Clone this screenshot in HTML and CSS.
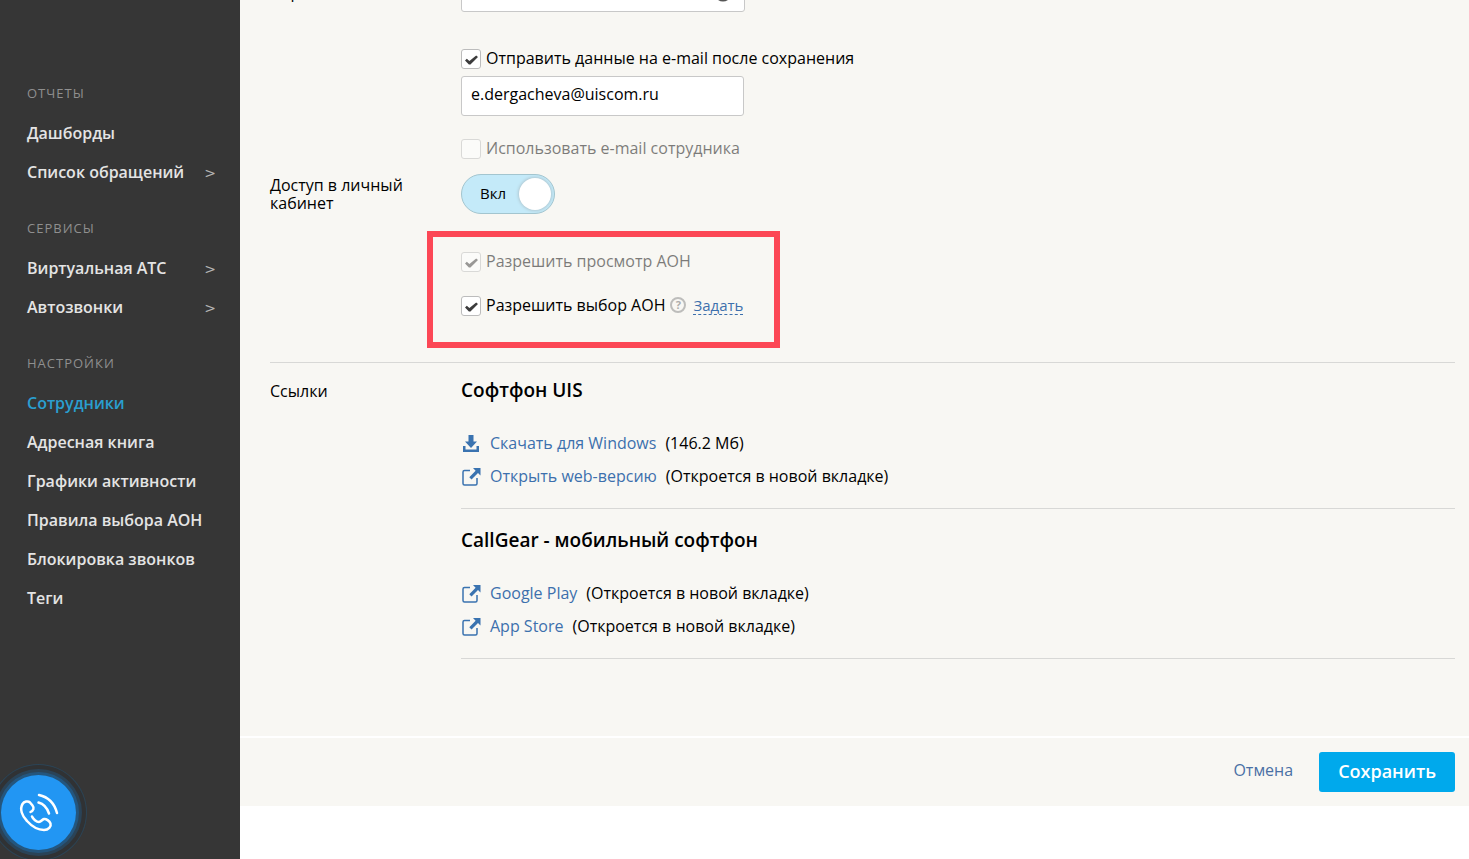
FILE: index.html
```html
<!DOCTYPE html>
<html lang="ru">
<head>
    <meta charset="UTF-8">
    <meta name="viewport" content="width=device-width, initial-scale=1.0">
    <title>Сотрудники</title>
    <link rel="stylesheet" href="styles.css">
</head>
<body>
    <svg class="sprite" aria-hidden="true">
        <symbol id="download" viewBox="0 0 20 20">
            <path d="M7.500 1h5v6.500h3.500l-6 6.500L4 7.500h3.500z"/>
            <path d="M2 12h2.500v3.500h11V12H18v6H2z"/>
        </symbol>
        <symbol id="external" viewBox="0 0 20 20">
            <path d="M9 3.500H3.500Q2 3.500 2 5V16.500Q2 18 3.500 18H14.500Q16 18 16 16.500V11" fill="none" stroke="currentColor" stroke-width="1.500"/>
            <path d="M12 1h7.500v7.500l-2.500-2.500L10.500 12.500L8.300 10.300L14.600 3.700z"/>
        </symbol>
    </svg>

    <div class="page">
        <nav class="sidebar">
            <div class="menu">
                <h2>ОТЧЕТЫ</h2>
                <a href="#">Дашборды</a>
                <a href="#">Список обращений <span class="arrow">&gt;</span></a>
            </div>
            <div class="menu">
                <h2>СЕРВИСЫ</h2>
                <a href="#">Виртуальная АТС <span class="arrow">&gt;</span></a>
                <a href="#">Автозвонки <span class="arrow">&gt;</span></a>
            </div>
            <div class="menu">
                <h2>НАСТРОЙКИ</h2>
                <a href="#" class="active">Сотрудники</a>
                <a href="#">Адресная книга</a>
                <a href="#">Графики активности</a>
                <a href="#">Правила выбора АОН</a>
                <a href="#">Блокировка звонков</a>
                <a href="#">Теги</a>
            </div>
        </nav>

        <main class="main">
            <form class="form">
                <div class="row">
                    <label class="name" for="password">Пароль</label>
                    <div class="password">
                        <input type="password" class="field" id="password">
                        <svg class="eye" viewBox="0 0 20 14">
                            <path d="M1 7Q10-4 19 7Q10 18 1 7z" fill="none" stroke="#555" stroke-width="2"/>
                            <circle cx="10" cy="7" r="3" fill="#555"/>
                        </svg>
                    </div>
                </div>

                <div class="row email">
                    <div class="controls">
                        <label class="check"><input type="checkbox" checked>Отправить данные на e-mail после сохранения</label>
                        <input type="email" class="field" value="e.dergacheva@uiscom.ru" aria-label="E-mail">
                        <label class="check disabled"><input type="checkbox" disabled>Использовать e-mail сотрудника</label>
                    </div>
                </div>

                <div class="row access">
                    <label class="name" for="access">Доступ в личный кабинет</label>
                    <div class="controls">
                        <label class="toggle">
                            <input type="checkbox" id="access" checked>
                            <span>Вкл</span>
                        </label>
                        <div class="highlight">
                            <label class="check disabled"><input type="checkbox" checked disabled>Разрешить просмотр АОН</label>
                            <div class="check-line">
                                <label class="check"><input type="checkbox" checked>Разрешить выбор АОН</label>
                                <button type="button" class="help">?</button>
                                <a href="#" class="set">Задать</a>
                            </div>
                        </div>
                    </div>
                </div>

                <div class="row links">
                    <div class="name">Ссылки</div>
                    <div class="controls">
                        <section class="apps">
                            <h3>Софтфон UIS</h3>
                            <p><svg><use href="#download"/></svg><a href="#">Скачать для Windows</a><span>(146.2 Мб)</span></p>
                            <p><svg><use href="#external"/></svg><a href="#">Открыть web-версию</a><span>(Откроется в новой вкладке)</span></p>
                        </section>
                        <section class="apps">
                            <h3>CallGear - мобильный софтфон</h3>
                            <p><svg><use href="#external"/></svg><a href="#">Google Play</a><span>(Откроется в новой вкладке)</span></p>
                            <p><svg><use href="#external"/></svg><a href="#">App Store</a><span>(Откроется в новой вкладке)</span></p>
                        </section>
                    </div>
                </div>
            </form>

            <div class="actions">
                <button type="button" class="cancel">Отмена</button>
                <button type="submit" class="save">Сохранить</button>
            </div>
        </main>
    </div>

    <button class="call" aria-label="Позвонить">
        <svg viewBox="18 42 42 42">
            <path d="M30.500 62C33.500 60.500 34.500 58 32.500 55.500L30 52.500C28 50.500 24 51.500 22.500 54C19.500 59 22 66 27 71C32 76.500 38 80 44 80C48.500 80 51.500 76.500 50.500 73.500C49.500 71 46 68.500 44 69C42 69.500 41 72 39 72C36.500 72 33 69 32 66.500"/>
            <path d="M39 45Q53 48 57 63"/>
            <path d="M38.500 52.500Q46 54.500 49 63.500"/>
        </svg>
    </button>
</body>
</html>
```

FILE: styles.css
```css
* {
    box-sizing: border-box;
}
body {
    margin: 0;
    font-family: "Open Sans", "Noto Sans", sans-serif;
    font-size: 16px;
    color: #000;
    background-color: #fff;
}
a {
    color: #3d70ad;
    text-decoration: none;
}
button,
input {
    font: inherit;
}
.sprite {
    display: none;
}
.page {
    display: flex;
    min-height: 100vh;
}

/* Sidebar */
.sidebar {
    flex: 0 0 240px;
    padding: 73px 24px 0 27px;
    background-color: #363636;
}
.menu {
    margin-bottom: 16px;
}
.menu h2 {
    margin: 0;
    font-size: 13px;
    font-weight: 400;
    line-height: 41px;
    letter-spacing: 1px;
    color: #8f8f8f;
}
.menu a {
    display: flex;
    justify-content: space-between;
    font-weight: 600;
    line-height: 39px;
    color: #e4e4e4;
}
.menu a.active {
    color: #2a9fd0;
}
.menu .arrow {
    font-family: "DejaVu Sans", sans-serif;
    font-size: 14px;
    font-weight: 400;
    line-height: 41px;
    height: 39px;
    color: #b4b4b4;
}

/* Form */
.main {
    flex: 1;
    min-width: 0;
    overflow: hidden;
}
.form {
    margin-top: -28px;
    padding: 0 14px 77px 30px;
    background-color: #f8f7f3;
}
.row {
    display: grid;
    grid-template-columns: 191px 1fr;
}
.row .controls {
    grid-column: 2;
}
.name {
    max-width: 150px;
    padding-top: 11px;
    line-height: 18px;
}
.password {
    position: relative;
    width: 284px;
    height: 40px;
}
.password .eye {
    position: absolute;
    top: 16px;
    right: 12px;
    width: 20px;
    height: 14px;
}
.field {
    display: block;
    width: 283px;
    height: 40px;
    padding: 0 9px 4px;
    border: 1px solid #c8c8c8;
    border-radius: 3px;
    background-color: #fff;
    color: #000;
}
.password .field {
    width: 100%;
}
.email {
    margin-top: 35px;
}
.email .field {
    margin: 7px 0 21px;
}
.check {
    display: flex;
    align-items: center;
    gap: 5px;
    line-height: 22px;
}
.check input {
    position: relative;
    top: 1px;
    width: 20px;
    height: 20px;
    margin: 0;
    appearance: none;
    border: 1px solid #bcbcbc;
    border-radius: 3px;
    background-color: #fff;
}
.check input:checked::before {
    content: "";
    display: block;
    width: 13px;
    height: 10px;
    margin: 5px 3px;
    background-color: #3c3c3c;
    clip-path: polygon(0 55%, 14% 38%, 34% 60%, 86% 4%, 100% 20%, 42% 96%, 30% 96%);
}
.check.disabled {
    opacity: 0.5;
}
.access {
    margin-top: 15px;
}
.access .name {
    padding-top: 2px;
}
.toggle {
    position: relative;
    display: block;
    width: 94px;
    height: 40px;
}
.toggle input {
    width: 94px;
    height: 40px;
    margin: 0;
    appearance: none;
    border: 1px solid #a3c5cf;
    border-radius: 20px;
    background-color: #c4eaf9;
}
.toggle input::before {
    content: "";
    display: block;
    width: 32px;
    height: 32px;
    margin: 3px 3px 3px auto;
    border-radius: 50%;
    background-color: #fff;
    box-shadow: 0 0 3px 1px #b0c8d2;
}
.toggle span {
    position: absolute;
    top: 0;
    left: 19px;
    font-size: 15px;
    line-height: 38px;
}
.highlight {
    width: fit-content;
    margin: 17px 0 14px -34px;
    padding: 13px 31px 26px 28px;
    border: 6px solid #fc4755;
}
.check-line {
    display: flex;
    align-items: center;
    margin-top: 22px;
}
.help {
    width: 16px;
    height: 16px;
    margin: 0 7px 0 5px;
    padding: 0;
    border: 2px solid #bdbdbb;
    border-radius: 50%;
    background: none;
    font-size: 11px;
    font-weight: 700;
    line-height: 12px;
    color: #adadab;
}
.set {
    border-bottom: 1px dashed #3d70ad;
    font-size: 15px;
    line-height: 18px;
}

/* Links */
.links {
    border-top: 1px solid #d8d8d6;
}
.links .name {
    padding-top: 19px;
}
.apps {
    padding: 19px 0 15px;
    border-bottom: 1px solid #d8d8d6;
}
.apps:first-child {
    padding-top: 15px;
}
.apps h3 {
    margin: 0 0 25px;
    font-size: 19px;
    font-weight: 600;
    line-height: 24px;
}
.apps p {
    display: flex;
    align-items: center;
    gap: 9px;
    margin: 0;
    line-height: 33px;
}
.apps svg {
    width: 20px;
    height: 20px;
    fill: #3a73b0;
    color: #3a73b0;
}

/* Bottom bar */
.actions {
    display: flex;
    justify-content: flex-end;
    align-items: center;
    gap: 26px;
    padding: 14px;
    border-top: 2px solid #fff;
    background-color: #f8f7f3;
}
.cancel {
    padding: 0 0 4px;
    border: none;
    background: none;
    color: #4a70a5;
}
.save {
    height: 40px;
    padding: 0 19px 2px;
    border: none;
    border-radius: 3px;
    background-color: #00a9ec;
    font-size: 18px;
    font-weight: 600;
    color: #fff;
}

/* Call button */
.call {
    position: fixed;
    left: 1px;
    bottom: 9px;
    display: flex;
    justify-content: center;
    align-items: center;
    width: 75px;
    height: 75px;
    padding: 0;
    border: none;
    border-radius: 50%;
    background-color: #2296f3;
    box-shadow: 0 0 0 3px #24567e, 0 0 0 6px #2a4357, 0 0 0 10px #303234, 0 0 0 11px #2b4456;
}
.call svg {
    width: 42px;
    height: 42px;
    fill: none;
    stroke: #fff;
    stroke-width: 2.5;
    stroke-linecap: round;
    stroke-linejoin: round;
}
```
